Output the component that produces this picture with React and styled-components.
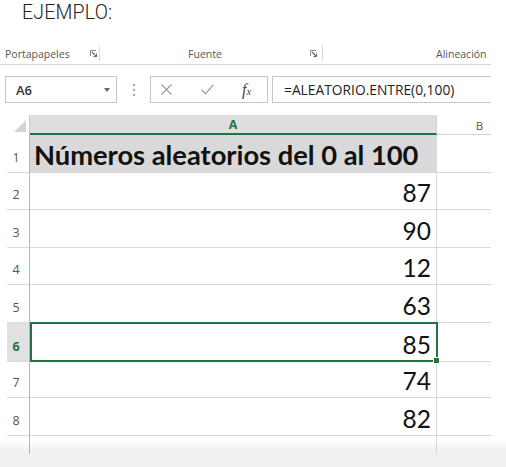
import React from "react";
import styled, { createGlobalStyle } from "styled-components";

const Global = createGlobalStyle`
  html, body { margin: 0; padding: 0; background: #fff; }
  body { width: 506px; height: 467px; overflow: hidden; }
`;

const Page = styled.div`
  width: 506px;
  height: 467px;
  display: flex;
  flex-direction: column;
  background: #fff;
`;

const Sheet = styled.div`
  width: 491px;
  overflow: hidden;
  display: flex;
  flex-direction: column;
`;

const Heading = styled.div`
  height: 40px;
  box-sizing: border-box;
  padding: 2px 0 0 22px;
  font-family: Roboto, "Liberation Sans", sans-serif;
  font-weight: 300;
  font-size: 19.5px;
  line-height: 22px;
  color: #222;
  letter-spacing: 0.2px;
`;

const Ribbon = styled.div`
  height: 25px;
  box-sizing: border-box;
  border-bottom: 1px solid #d6d6d6;
  display: flex;
  align-items: center;
  padding-top: 3px;
  font-family: "Open Sans", "Noto Sans", sans-serif;
  font-size: 10.5px;
  color: #555;
  white-space: nowrap;
`;

const Group = styled.div`
  width: ${(p) => p.$w}px;
  flex: none;
  display: flex;
  align-items: center;
  height: 16px;
`;

const GroupLabel = styled.span`
  padding-left: ${(p) => p.$pad || 0}px;
  flex: ${(p) => (p.$grow ? 1 : "none")};
  text-align: ${(p) => (p.$grow ? "center" : "left")};
`;

const Launcher = styled.svg`
  width: 7px;
  height: 7px;
  margin-left: ${(p) => p.$ml || 0}px;
  flex: none;
`;

const Sep = styled.div`
  width: 1px;
  height: 15px;
  background: #dadada;
  margin-left: ${(p) => (p.$ml != null ? `${p.$ml}px` : "auto")};
`;

const FormulaBar = styled.div`
  margin-top: 11px;
  height: 27px;
  display: flex;
  align-items: stretch;
  padding-left: 5px;
`;

const NameBox = styled.div`
  width: 112px;
  box-sizing: border-box;
  border: 1px solid #c6c6c6;
  display: flex;
  align-items: center;
  padding: 0 6px 0 10px;
  font-family: "Open Sans", "Noto Sans", sans-serif;
  font-size: 13px;
  font-weight: 600;
  color: #333;
`;

const Caret = styled.span`
  margin-left: auto;
  width: 0;
  height: 0;
  border-left: 3.5px solid transparent;
  border-right: 3.5px solid transparent;
  border-top: 4px solid #666;
`;

const Dots = styled.div`
  width: 33px;
  display: flex;
  flex-direction: column;
  align-items: center;
  justify-content: center;
  gap: 3px;
  & > span {
    width: 2px;
    height: 2px;
    background: #a8a8a8;
  }
`;

const FxButtons = styled.div`
  width: 118px;
  box-sizing: border-box;
  border: 1px solid #c6c6c6;
  display: flex;
  align-items: center;
  padding-left: 10px;
`;

const IconSlot = styled.div`
  width: ${(p) => p.$w}px;
  display: flex;
  align-items: center;
  flex: none;
`;

const Fx = styled.span`
  font-family: "Liberation Serif", "DejaVu Serif", serif;
  font-style: italic;
  font-size: 16px;
  color: #444;
  & > small {
    font-size: 10.5px;
  }
`;

const FormulaInput = styled.div`
  flex: 1;
  margin-left: 4px;
  box-sizing: border-box;
  border: 1px solid #c6c6c6;
  border-right: none;
  display: flex;
  align-items: center;
  padding-left: 11px;
  font-family: "Open Sans", "Noto Sans", sans-serif;
  font-size: 13.8px;
  color: #222;
  white-space: nowrap;
`;

const Grid = styled.div`
  margin-top: 12px;
  display: flex;
  flex-direction: column;
`;

const HeaderRow = styled.div`
  display: grid;
  grid-template-columns: 30px 407px 86px;
  height: 20px;
`;

const Corner = styled.div`
  border-right: 1px solid #c9c9c9;
  box-sizing: border-box;
  display: flex;
  align-items: flex-end;
  justify-content: flex-end;
  padding: 0 3px 3px 0;
`;

const ColHead = styled.div`
  box-sizing: border-box;
  display: flex;
  align-items: center;
  justify-content: center;
  font-family: "Open Sans", "Noto Sans", sans-serif;
  font-size: ${(p) => (p.$active ? 12.5 : 11.5)}px;
  font-weight: ${(p) => (p.$active ? 700 : 400)};
  color: ${(p) => (p.$active ? "#217346" : "#555")};
  background: ${(p) => (p.$active ? "#dedede" : "#fff")};
  border-bottom: ${(p) => (p.$active ? "2px solid #217346" : "1px solid #d4d4d4")};
  border-right: 1px solid #d4d4d4;
  padding-top: 1px;
`;

const Row = styled.div`
  display: grid;
  grid-template-columns: 30px 407px 86px;
  height: ${(p) => p.$h}px;
`;

const RowHead = styled.div`
  margin-left: 7px;
  box-sizing: border-box;
  border-right: 1px solid #b5b5b5;
  border-bottom: 1px solid #d9d9d9;
  background: ${(p) => (p.$active ? "#e1e1e1" : "#fff")};
  display: flex;
  align-items: flex-end;
  justify-content: center;
  padding: 0 4px 7px 0;
  font-family: "Open Sans", "Noto Sans", sans-serif;
  font-size: 12.5px;
  line-height: 15px;
  font-weight: ${(p) => (p.$active ? 700 : 400)};
  color: ${(p) => (p.$active ? "#217346" : "#555")};
`;

const Cell = styled.div`
  position: relative;
  box-sizing: border-box;
  border-right: 1px solid #d9d9d9;
  border-bottom: 1px solid #d9d9d9;
  background: ${(p) => (p.$fill ? "#d9d9d9" : "#fff")};
  display: flex;
  align-items: flex-end;
  justify-content: ${(p) => (p.$title ? "flex-start" : "flex-end")};
  padding: 0 5px 4px 4px;
  font-family: Lato, "Open Sans", sans-serif;
  font-size: ${(p) => (p.$title ? 27.3 : 24.5)}px;
  font-weight: ${(p) => (p.$title ? 700 : 400)};
  line-height: 1;
  color: #111;
  white-space: nowrap;
  ${(p) =>
    p.$selected &&
    `
    &::after {
      content: "";
      position: absolute;
      top: -1px;
      left: 0;
      right: -2px;
      bottom: -1px;
      border: 2px solid #217346;
      pointer-events: none;
    }
    &::before {
      content: "";
      position: absolute;
      right: -4px;
      bottom: -3px;
      width: 5px;
      height: 5px;
      background: #217346;
      border: 1px solid #fff;
      z-index: 2;
    }
  `}
`;

const EmptyCell = styled.div`
  box-sizing: border-box;
  border-bottom: 1px solid #d9d9d9;
`;

const Tail = styled.div`
  height: 31px;
  width: 506px;
  background: linear-gradient(to bottom, #fff 0px, #fff 5px, #f1f1f1 14px, #f1f1f1 100%);
  display: grid;
  grid-template-columns: 30px 407px;
  align-items: start;
`;

const TailLine = styled.div`
  height: 18px;
  border-right: 1px solid ${(p) => p.$c};
`;

const rows = [
  { n: 1, h: 38, v: "Números aleatorios del 0 al 100", title: true },
  { n: 2, h: 37, v: "87" },
  { n: 3, h: 38, v: "90" },
  { n: 4, h: 37, v: "12" },
  { n: 5, h: 38, v: "63" },
  { n: 6, h: 39, v: "85", sel: true },
  { n: 7, h: 36, v: "74" },
  { n: 8, h: 38, v: "82" },
];

const LaunchIcon = ({ ml }) => (
  <Launcher $ml={ml} viewBox="0 0 7 7">
    <path d="M0.5 6V0.5H6" fill="none" stroke="#8a8a8a" strokeWidth="1" />
    <path d="M2 2L6.5 6.5M3.5 6.5H6.5V3.5" fill="none" stroke="#6a6a6a" strokeWidth="1.2" />
  </Launcher>
);

export default function App() {
  return (
    <Page>
      <Global />
      <Sheet>
        <Heading>EJEMPLO:</Heading>
        <Ribbon>
          <Group $w={100}>
            <GroupLabel $pad={5}>Portapapeles</GroupLabel>
            <LaunchIcon ml={20} />
            <Sep />
          </Group>
          <Group $w={223}>
            <GroupLabel $grow>Fuente</GroupLabel>
            <LaunchIcon ml={0} />
            <Sep $ml={5} />
          </Group>
          <Group $w={200}>
            <GroupLabel $pad={113}>Alineación</GroupLabel>
          </Group>
        </Ribbon>
        <FormulaBar>
          <NameBox>
            A6
            <Caret />
          </NameBox>
          <Dots>
            <span />
            <span />
            <span />
          </Dots>
          <FxButtons>
            <IconSlot $w={40}>
              <svg width="11" height="11" viewBox="0 0 11 11">
                <path d="M0.5 0.5L10.5 10.5M10.5 0.5L0.5 10.5" stroke="#9a9a9a" strokeWidth="1.1" fill="none" />
              </svg>
            </IconSlot>
            <IconSlot $w={41}>
              <svg width="13" height="11" viewBox="0 0 13 11">
                <path d="M0.8 6L4.5 9.8L12.3 0.6" stroke="#9a9a9a" strokeWidth="1.2" fill="none" />
              </svg>
            </IconSlot>
            <IconSlot $w={20}>
              <Fx>
                f<small>x</small>
              </Fx>
            </IconSlot>
          </FxButtons>
          <FormulaInput>=ALEATORIO.ENTRE(0,100)</FormulaInput>
        </FormulaBar>
        <Grid>
          <HeaderRow>
            <Corner>
              <svg width="12" height="12" viewBox="0 0 12 12">
                <path d="M12 0V12H0Z" fill="#d3d3d3" />
              </svg>
            </Corner>
            <ColHead $active>A</ColHead>
            <ColHead>B</ColHead>
          </HeaderRow>
          {rows.map((r) => (
            <Row key={r.n} $h={r.h}>
              <RowHead $active={r.sel}>{r.n}</RowHead>
              <Cell $title={r.title} $fill={r.title} $selected={r.sel}>
                {r.v}
              </Cell>
              <EmptyCell />
            </Row>
          ))}
        </Grid>
      </Sheet>
      <Tail>
        <TailLine $c="#b5b5b5" />
        <TailLine $c="#d9d9d9" />
      </Tail>
    </Page>
  );
}
